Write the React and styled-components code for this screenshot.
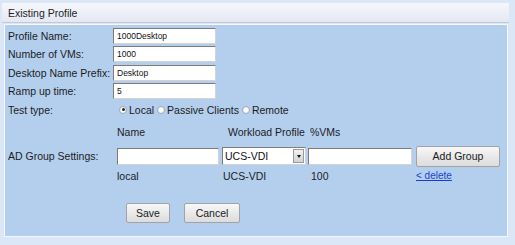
import React from 'react';
import styled, { createGlobalStyle } from 'styled-components';

const GlobalStyle = createGlobalStyle`
  html, body {
    margin: 0;
    padding: 0;
    background: #dbe7f6;
    font-family: "Liberation Sans", Arial, sans-serif;
  }
`;

const Frame = styled.div`
  width: 509px;
  height: 245px;
  padding: 3px 0 0 2px;
  box-sizing: border-box;
`;

const Header = styled.div`
  height: 19px;
  display: flex;
  align-items: center;
  padding-left: 6px;
  font-size: 10.5px;
  color: #1e1e1e;
  background: linear-gradient(#f6f7fc, #e4e8f3);
  border-bottom: 1px solid #c6c8cc;
`;

const Panel = styled.div`
  margin: 1px 0 0 2px;
  width: 504px;
  height: 213px;
  box-sizing: border-box;
  border: 1px solid #f4f8fd;
  background: #b4cfee;
  padding: 3px 0 0 3px;
  font-size: 10.5px;
  color: #1c1c1c;
`;

const FormGrid = styled.div`
  display: grid;
  grid-template-columns: 105px 1fr;
  grid-auto-rows: 16px;
  row-gap: 2.4px;
  align-items: center;
`;

const Label = styled.div`
  white-space: nowrap;
`;

const TextInput = styled.input`
  box-sizing: border-box;
  width: ${p => p.$w || 103}px;
  height: ${p => p.$h || 16}px;
  margin: 0;
  padding: 0 0 0 3px;
  font-family: "Liberation Sans", Arial, sans-serif;
  font-size: 8.5px;
  color: #111;
  background: #fff;
  border: 1px solid;
  border-color: #7c7c7c #d4d4d4 #d4d4d4 #7c7c7c;
  outline: none;
`;

const RadioGroup = styled.div`
  display: flex;
  align-items: center;
  padding-left: 6px;
`;

const RadioDot = styled.span`
  display: inline-block;
  width: 6px;
  height: 6px;
  border-radius: 50%;
  border: 1px solid #a6aab0;
  background: radial-gradient(circle, #fff 40%, #dfe2e8);
  margin: 0 2px 0 ${p => (p.$first ? 0 : 3)}px;
  position: relative;
  &::after {
    content: '';
    display: ${p => (p.$on ? 'block' : 'none')};
    position: absolute;
    left: 1.5px;
    top: 1.5px;
    width: 3px;
    height: 3px;
    border-radius: 50%;
    background: #222;
  }
`;

const AdGrid = styled.div`
  display: grid;
  grid-template-columns: 109px 105px 86px 108px 84px;
  margin-top: 7px;
  align-items: center;
`;

const ColHead = styled.div`
  height: 14px;
  display: flex;
  align-items: center;
  padding-left: ${p => p.$pad || 0}px;
  margin-bottom: 7px;
`;

const Cell = styled.div`
  padding-left: ${p => p.$pad || 0}px;
  white-space: nowrap;
`;

const Select = styled.div`
  box-sizing: border-box;
  width: 84px;
  height: 18px;
  display: flex;
  align-items: stretch;
  background: #fff;
  border: 1px solid;
  border-color: #7c7c7c #d4d4d4 #d4d4d4 #7c7c7c;
`;

const SelectText = styled.span`
  flex: 1;
  display: flex;
  align-items: center;
  padding-left: 2px;
  font-size: 10.5px;
  color: #111;
`;

const SelectArrow = styled.span`
  width: 11px;
  margin: 1px;
  background: linear-gradient(#f2f2f2, #d2d2d2);
  border: 1px solid #9a9a9a;
  box-sizing: border-box;
  display: flex;
  align-items: center;
  justify-content: center;
  &::after {
    content: '';
    border-left: 2.5px solid transparent;
    border-right: 2.5px solid transparent;
    border-top: 3px solid #111;
  }
`;

const Button = styled.button`
  box-sizing: border-box;
  width: ${p => p.$w}px;
  height: ${p => p.$h || 20}px;
  margin: 0;
  padding: 0;
  font-family: "Liberation Sans", Arial, sans-serif;
  font-size: 10.5px;
  color: #1a1a1a;
  background: linear-gradient(#f7f7f7, #dcdcdc);
  border: 1px solid #a3a3a3;
  border-radius: 2px;
`;

const DataRow = styled(Cell)`
  margin-top: 1px;
  height: 16px;
  display: flex;
  align-items: center;
`;

const DeleteLink = styled.a`
  color: #1a3fd0;
  text-decoration: underline;
  font-size: 10px;
`;

const Actions = styled.div`
  display: flex;
  gap: 14px;
  margin: 19px 0 0 118px;
`;

export default function App() {
  return (
    <>
      <GlobalStyle />
      <Frame>
        <Header>Existing Profile</Header>
        <Panel>
          <FormGrid>
            <Label>Profile Name:</Label>
            <TextInput defaultValue="1000Desktop" />
            <Label>Number of VMs:</Label>
            <TextInput defaultValue="1000" />
            <Label>Desktop Name Prefix:</Label>
            <TextInput defaultValue="Desktop" />
            <Label>Ramp up time:</Label>
            <TextInput defaultValue="5" />
            <Label>Test type:</Label>
            <RadioGroup>
              <RadioDot $first $on />Local
              <RadioDot />Passive Clients
              <RadioDot />Remote
            </RadioGroup>
          </FormGrid>

          <AdGrid>
            <div />
            <ColHead>Name</ColHead>
            <ColHead $pad={6}>Workload Profile</ColHead>
            <ColHead $pad={2}>%VMs</ColHead>
            <div />

            <Label>AD Group Settings:</Label>
            <Cell><TextInput $w={102} $h={17} /></Cell>
            <Cell><Select><SelectText>UCS-VDI</SelectText><SelectArrow /></Select></Cell>
            <Cell><TextInput $w={104} $h={17} /></Cell>
            <Cell><Button $w={84} $h={21}>Add Group</Button></Cell>

            <div />
            <DataRow>local</DataRow>
            <DataRow $pad={1}>UCS-VDI</DataRow>
            <DataRow $pad={3}>100</DataRow>
            <DataRow><DeleteLink href="#">&lt; delete</DeleteLink></DataRow>
          </AdGrid>

          <Actions>
            <Button $w={44}>Save</Button>
            <Button $w={56}>Cancel</Button>
          </Actions>
        </Panel>
      </Frame>
    </>
  );
}
